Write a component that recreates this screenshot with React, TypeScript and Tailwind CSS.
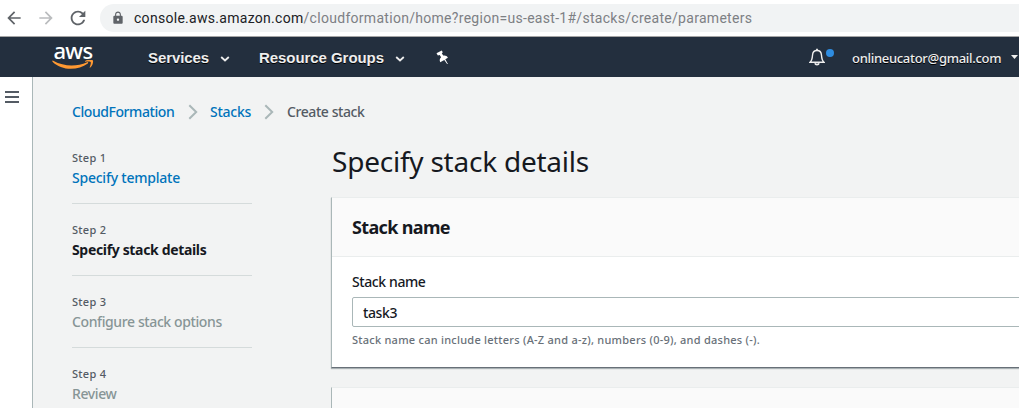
import React from "react";
import { MdArrowBack, MdArrowForward, MdRefresh, MdLock } from "react-icons/md";

type StepState = "done" | "current" | "pending";

const steps: { label: string; title: string; state: StepState; spacing: string }[] = [
  { label: "Step 1", title: "Specify template", state: "done", spacing: "tracking-[-0.23px]" },
  { label: "Step 2", title: "Specify stack details", state: "current", spacing: "tracking-[-0.34px]" },
  { label: "Step 3", title: "Configure stack options", state: "pending", spacing: "tracking-[-0.39px]" },
  { label: "Step 4", title: "Review", state: "pending", spacing: "tracking-[-0.4px]" },
];

const titleStyle: Record<StepState, string> = {
  done: "font-medium text-[#0073bb]",
  current: "font-bold text-[#16191f]",
  pending: "font-medium text-[#879596]",
};

function BrowserBar() {
  return (
    <div className="flex h-[37px] shrink-0 items-center border-b border-[#a5a5a5] bg-white">
      <MdArrowBack className="ml-1 size-5 shrink-0 text-[#5f6368]" />
      <MdArrowForward className="ml-3 size-5 shrink-0 text-[#babcbe]" />
      <MdRefresh className="ml-[11px] size-[22px] shrink-0 text-[#5f6368]" />
      <div className="ml-[11px] flex h-7 w-[960px] shrink-0 items-center rounded-full bg-[#f1f3f4]">
        <MdLock className="ml-[11px] size-[14px] shrink-0 text-[#5f6368]" />
        <span className="ml-[9px] font-['Roboto',sans-serif] text-[14px] tracking-[0.29px] whitespace-nowrap text-[#7d8084]">
          <span className="text-[#202124]">console.aws.amazon.com</span>
          /cloudformation/home?region=us-east-1#/stacks/create/parameters
        </span>
      </div>
    </div>
  );
}

function AwsLogo() {
  return (
    <div className="ml-[52px] flex w-[42px] flex-col items-center">
      <span className="-mt-1 font-['Noto_Sans',sans-serif] text-[22px] leading-[20px] font-medium tracking-[-0.6px] text-white">
        aws
      </span>
      <svg className="h-[11px] w-[42px]" viewBox="0 0 42 11" fill="#ff9932">
        <path d="M.3 1.1c0-.6.4-.7.9-.4 11.400 6.200 23.500 6 33.900 1.500.9-.4 1.600.6.7 1.300C25.800 10.900 9.200 10.700.5 1.700z" />
        <path d="M33.200.9c2-1.200 6.700-1.500 7.600-.6.8.9-.1 5.400-2.500 7.300-.5.4-.8.1-.6-.4.700-1.700 1.500-4.400.9-5.100-.7-.7-3.300-.6-5.100-.4-.6.1-.7-.4-.3-.8z" />
      </svg>
    </div>
  );
}

function Chevron({ className }: { className: string }) {
  return (
    <svg className={className} viewBox="0 0 10 6" fill="none" stroke="#eee" strokeWidth="1.800">
      <path d="m1.200 1 3.800 3.500L8.800 1" />
    </svg>
  );
}

function NavBar() {
  return (
    <div className="flex h-10 shrink-0 items-center bg-[#232f3e] text-[#eee]">
      <AwsLogo />
      <span className="ml-[54px] w-[62px] pt-[2px] font-['Liberation_Sans',sans-serif] text-[15px] font-bold tracking-[-0.09px] [text-shadow:0_1px_0_#000]">
        Services
      </span>
      <Chevron className="mt-[3px] ml-[10px] h-[6px] w-[10px]" />
      <span className="ml-[29px] w-[126px] pt-[2px] font-['Liberation_Sans',sans-serif] text-[15px] font-bold tracking-[-0.06px] whitespace-nowrap [text-shadow:0_1px_0_#000]">
        Resource Groups
      </span>
      <Chevron className="mt-[3px] ml-[10px] h-[6px] w-[10px]" />
      <svg className="ml-[31px] h-[15px] w-[13px] text-white" viewBox="0 0 13 15" fill="currentColor">
        <path d="M.5 3.300 5.700.4l1.100 1.900-1 .9 1.400 2.400c2-.5 3.900.3 4.700 2.200L9.300 9.300l2.600 4.600-.8.200-2.800-4.200-4.100 2.400c-.9-1.900-.5-3.600.9-5L3.700 5l-1.800.5z" />
      </svg>
      <svg className="ml-[360px] h-[18px] w-[16px]" viewBox="0 0 16 18" fill="none" stroke="#eee" strokeWidth="1.400">
        <path d="M1 14.300h14c-2-1.700-2.300-3.300-2.500-7C12.300 4 10.700 2.500 8 2.500S3.700 4 3.500 7.300c-.2 3.700-.5 5.300-2.500 7z" />
        <path d="M8 2.500V.8M6 15.300c.5 1.700 3.500 1.700 4 0" strokeWidth="1.800" />
      </svg>
      <span className="mb-2 ml-[1px] size-2 rounded-full bg-[#2e8ce0]" />
      <span className="ml-[18px] pt-px font-['Noto_Sans',sans-serif] text-[13px] font-medium tracking-[-0.3px] whitespace-nowrap [text-shadow:0_1px_0_#000]">
        onlineucator@gmail.com
      </span>
      <svg className="ml-auto h-1 w-[9px]" viewBox="0 0 9 4" fill="#eee">
        <path d="M1 0h7L4.500 4z" />
      </svg>
    </div>
  );
}

function Separator() {
  return (
    <svg className="h-4 w-[10px] shrink-0" viewBox="0 0 10 16" fill="none" stroke="#aab7b8" strokeWidth="2">
      <path d="m1.300 1.200 6.900 6.800-6.900 6.800" />
    </svg>
  );
}

export default function App() {
  return (
    <div className="flex h-[408px] w-[1019px] flex-col overflow-hidden bg-[#f2f3f3] font-['Noto_Sans',sans-serif] text-[14px] leading-[22px] text-[#16191f]">
      <BrowserBar />
      <NavBar />
      <div className="flex min-h-0 flex-1">
        <div className="w-[33px] shrink-0 border-r border-[#aab7b8] bg-white pt-[14px] pl-[5px]">
          <div className="flex w-[14px] flex-col gap-[3px]">
            <span className="h-[2px] bg-[#545b64]" />
            <span className="h-[2px] bg-[#545b64]" />
            <span className="h-[2px] bg-[#545b64]" />
          </div>
        </div>
        <div className="flex min-w-0 flex-1 flex-col pt-6 pl-[39px]">
          <div className="flex h-[22px] shrink-0 items-center font-medium whitespace-nowrap">
            <span className="w-[116px] tracking-[-0.43px] text-[#0073bb]">CloudFormation</span>
            <Separator />
            <span className="ml-[12px] w-[54px] tracking-[-0.25px] text-[#0073bb]">Stacks</span>
            <Separator />
            <span className="ml-[13px] tracking-[-0.42px] text-[#545b64]">Create stack</span>
          </div>
          <div className="flex">
            <div className="mt-[21px] w-[180px] shrink-0">
              {steps.map((step) => (
                <div key={step.label} className="mb-3 h-[60px] border-b border-[#d5dbdb] pt-[3px] whitespace-nowrap">
                  <div className="h-[20px] text-[11px] leading-[22px] font-medium tracking-[0.3px] text-[#545b64]">
                    {step.label}
                  </div>
                  <div className={`${titleStyle[step.state]} ${step.spacing}`}>{step.title}</div>
                </div>
              ))}
            </div>
            <div className="ml-[79px] w-[800px] shrink-0 pt-5">
              <h1 className="h-[54px] pl-[1px] text-[28px] leading-[36px] tracking-[-0.23px] whitespace-nowrap">
                Specify stack details
              </h1>
              <section className="h-[171px] border border-t-[#eaeded] border-b-[#687078] border-l-[#aab7b8] bg-white shadow-[0_1px_1px_rgba(0,28,36,0.3)]">
                <h2 className="h-[59px] border-b border-[#eaeded] bg-[#fafafa] pt-[18px] pl-5 text-[18px] font-bold tracking-[-0.65px]">
                  Stack name
                </h2>
                <label className="block pt-[14px] pl-5">
                  <span className="block font-medium tracking-[-0.4px]">Stack name</span>
                  <span className="mt-1 flex h-[30px] items-center rounded-[2px] border border-[#aab7b8] pt-[2px] pl-[10px] font-medium tracking-[-0.4px]">
                    task3
                  </span>
                </label>
                <p className="pt-[2px] pl-5 text-[11px] font-medium tracking-[0.25px] text-[#687078]">
                  Stack name can include letters (A-Z and a-z), numbers (0-9), and dashes (-).
                </p>
              </section>
              <section className="mt-[19px] h-[60px] border border-t-[#eaeded] border-l-[#aab7b8] bg-[#fafafa]" />
            </div>
          </div>
        </div>
      </div>
    </div>
  );
}
